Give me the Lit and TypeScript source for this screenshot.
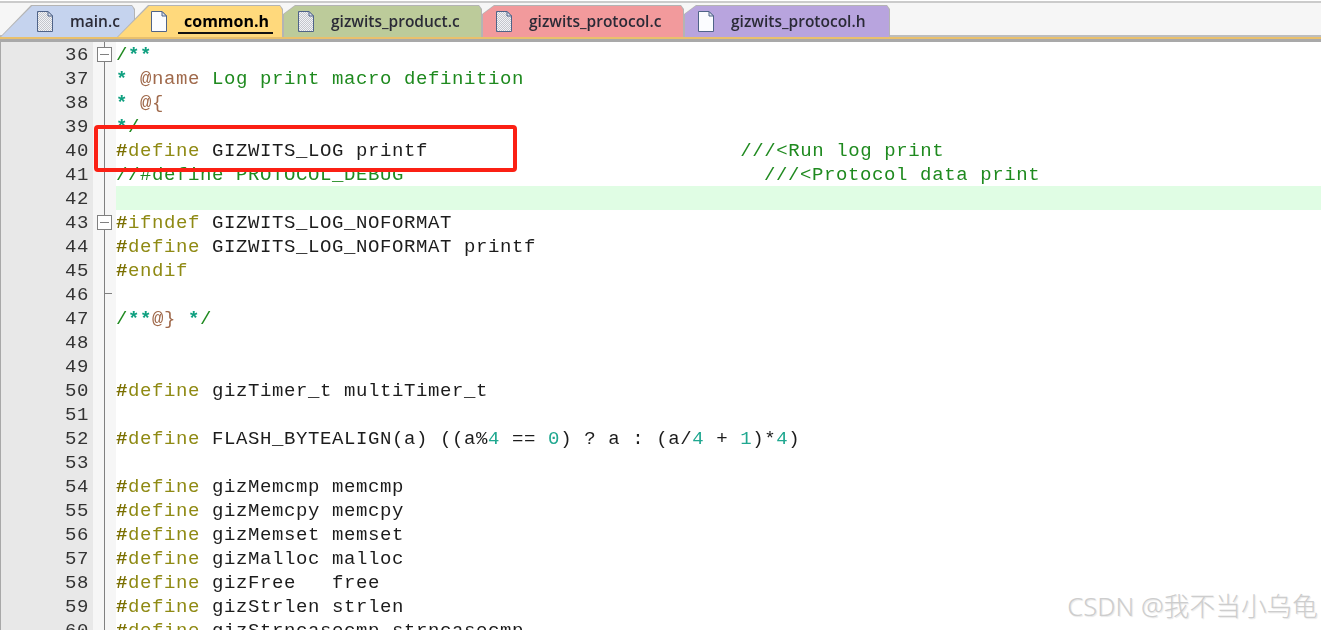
import { LitElement, html, css } from "lit";
import { customElement } from "lit/decorators.js";

type Seg = [string, string];
const def = (rest: string): Seg[] => [["h", "#"], ["k", "define"], ["t", " " + rest]];
const pad = (n: number) => " ".repeat(n);

const lines: { n: number; fold?: "box" | "end"; hl?: boolean; segs: Seg[] }[] = [
  { n: 36, fold: "box", segs: [["c", "/"], ["s", "**"]] },
  { n: 37, segs: [["s", "*"], ["c", " "], ["a", "@name"], ["c", " Log print macro definition"]] },
  { n: 38, segs: [["s", "*"], ["c", " "], ["a", "@{"]] },
  { n: 39, segs: [["s", "*"], ["c", "/"]] },
  { n: 40, segs: [...def("GIZWITS_LOG printf"), ["t", pad(26)], ["c", "///<Run log print"]] },
  { n: 41, segs: [["c", "//#define PROTOCOL_DEBUG" + pad(30) + "///<Protocol data print"]] },
  { n: 42, hl: true, segs: [] },
  { n: 43, fold: "box", segs: [["h", "#"], ["k", "ifndef"], ["t", " GIZWITS_LOG_NOFORMAT"]] },
  { n: 44, segs: def("GIZWITS_LOG_NOFORMAT printf") },
  { n: 45, segs: [["h", "#"], ["k", "endif"]] },
  { n: 46, fold: "end", segs: [] },
  { n: 47, segs: [["c", "/"], ["s", "**"], ["a", "@"], ["a", "}"], ["c", " "], ["s", "*"], ["c", "/"]] },
  { n: 48, segs: [] },
  { n: 49, segs: [] },
  { n: 50, segs: def("gizTimer_t multiTimer_t") },
  { n: 51, segs: [] },
  {
    n: 52,
    segs: [
      ...def("FLASH_BYTEALIGN(a) ((a%"),
      ["n", "4"], ["t", " == "], ["n", "0"], ["t", ") ? a : (a/"], ["n", "4"], ["t", " + "], ["n", "1"], ["t", ")*"], ["n", "4"], ["t", ")"],
    ],
  },
  { n: 53, segs: [] },
  { n: 54, segs: def("gizMemcmp memcmp") },
  { n: 55, segs: def("gizMemcpy memcpy") },
  { n: 56, segs: def("gizMemset memset") },
  { n: 57, segs: def("gizMalloc malloc") },
  { n: 58, segs: def("gizFree   free") },
  { n: 59, segs: def("gizStrlen strlen") },
  { n: 60, segs: def("gizStrncasecmp strncasecmp") },
];

const tabs = [
  { name: "main.c", cls: "main", hatch: true },
  { name: "common.h", cls: "common", hatch: false },
  { name: "gizwits_product.c", cls: "product", hatch: true },
  { name: "gizwits_protocol.c", cls: "protocol", hatch: true },
  { name: "gizwits_protocol.h", cls: "protoh", hatch: false },
];

const fileIcon = (hatch: boolean) => html`<svg class="file" width="18" height="23" viewBox="0 0 18 23">
  <defs>
    <pattern id="dots" width="2" height="2" patternUnits="userSpaceOnUse">
      <rect width="2" height="2" fill="#f2f3f6"/><rect width="1" height="1" fill="#c4c6cc"/><rect x="1" y="1" width="1" height="1" fill="#c4c6cc"/>
    </pattern>
  </defs>
  <path d="M1.5 1.5H12L16.5 6V21.5H1.5Z" fill="${hatch ? "url(#dots)" : "#fbfcff"}" stroke="#4f6388" stroke-width="1"/>
  <path d="M12 1.5V6H16.5Z" fill="#dfe6f2" stroke="#4f6388" stroke-width="1"/>
</svg>`;

@customElement("app-root")
export class AppRoot extends LitElement {
  static styles = css`
    :host { display: block; position: relative; height: 630px; overflow: hidden; background: #fff; }
    .tabbar { display: flex; height: 37px; box-sizing: border-box; padding-top: 2px; background: linear-gradient(#fff 0 1px, #cbcbcb 1px 3px, #f6f6f6 3px 35px, #bdbdbd 35px); filter: blur(0.35px); }
    .tab { box-sizing: border-box; height: 35px; display: flex; align-items: center; background: #b4b4b4; font: 600 15.5px "Open Sans", "Noto Sans", sans-serif; color: #2a2a36; padding-top: 3px; position: relative; gap: 16px; }
    .tab span { position: relative; }
    .tab::before { content: ""; position: absolute; inset: 0; background: var(--fill); clip-path: var(--inner); }
    .tab .file { position: relative; flex: none; }
    .main { width: 135px; --fill: #c5d3ee; clip-path: polygon(0 100%, 31px 3px, 132px 3px, 135px 7px, 135px 100%); --inner: polygon(1px 100%, 32px 4px, 132px 4px, 134px 8px, 134px 100%); padding-left: 36px; }
    .common { width: 166px; margin-left: -18px; --fill: #ffd97c; clip-path: polygon(0 100%, 31px 3px, 163px 3px, 166px 7px, 166px 100%); --inner: polygon(1px 100%, 32px 4px, 163px 4px, 165px 8px, 165px 100%); padding-left: 33px; color: #000; z-index: 1; font-weight: 700; font-size: 16px; }
    .common span::after { content: ""; position: absolute; left: -6px; right: -4px; top: 22px; height: 2px; background: #111; }
    .product { width: 199px; --fill: #bccb9a; clip-path: polygon(0 12px, 12px 3px, 196px 3px, 199px 7px, 199px 100%, 0 100%); --inner: polygon(1px 12px, 12px 4px, 196px 4px, 198px 8px, 198px 100%, 1px 100%); padding-left: 14px; }
    .protocol { width: 202px; --fill: #f29a9c; clip-path: polygon(0 12px, 12px 3px, 199px 3px, 202px 7px, 202px 100%, 0 100%); --inner: polygon(1px 12px, 12px 4px, 199px 4px, 201px 8px, 201px 100%, 1px 100%); padding-left: 13px; }
    .protoh { width: 206px; --fill: #b8a4de; clip-path: polygon(0 12px, 12px 3px, 203px 3px, 206px 7px, 206px 100%, 0 100%); --inner: polygon(1px 12px, 12px 4px, 203px 4px, 205px 8px, 205px 100%, 1px 100%); padding-left: 13px; }
    .rule { height: 5px; box-sizing: border-box; border-top: 2px solid #e9c06c; border-bottom: 3px solid #a9a9a9; filter: blur(0.35px); }
    .editor { position: relative; }
    .row { display: flex; height: 24px; }
    .num { width: 93px; box-sizing: border-box; flex: none; background: #e8e8e8; border-left: 1px solid #a8a8a8; padding-right: 4px; text-align: right; overflow: hidden; }
    .num, .code { font: 19px/26px "Liberation Mono", monospace; letter-spacing: 0.6px; }
    .num span { color: #333; filter: blur(0.35px); display: inline-block; }
    .fold { width: 23px; flex: none; position: relative; background-color: #f6f6f6; background-image: radial-gradient(#e2e2e2 0.6px, transparent 0.7px); background-size: 2px 2px; }
    .fold::before { content: ""; position: absolute; left: 11px; top: 0; bottom: 0; width: 1px; background: #808080; }
    .box { position: absolute; left: 4px; top: 5px; width: 15px; height: 15px; box-sizing: border-box; border: 1px solid #808080; background: #fff; }
    .box::after { content: ""; position: absolute; left: 2px; right: 2px; top: 6px; height: 1px; background: #808080; }
    .end { position: absolute; left: 11px; top: 11px; width: 8px; height: 1px; background: #808080; }
    .code { flex: 1; white-space: pre; color: #1c1c1c; overflow: hidden; }
    .code > div { filter: blur(0.35px); height: 24px; }
    .code.hl { background: #e0fde4; }
    .h { color: #7a6f00; font-weight: 700; }
    .k { color: #8f8a14; }
    .t { color: #1c1c1c; }
    .c { color: #1f8a1f; }
    .s { color: #10a080; font-weight: 700; }
    .a { color: #a06a4c; }
    .n { color: #20a890; }
    .mark { position: absolute; left: 94px; top: 83px; width: 423px; height: 47px; box-sizing: border-box; border: 4px solid #fb2014; border-radius: 4px; }
    .wm { position: absolute; right: 3px; bottom: 7px; font: 25.7px/32px "Noto Sans", "Noto Sans CJK SC", sans-serif; font-weight: 300; color: #cdcdcd; text-shadow: 1px 1px 1px #e8e8e8; white-space: pre; }
  `;

  render() {
    return html`
      <div class="tabbar">
        ${tabs.map(
          (t) => html`<div class="tab ${t.cls}">${fileIcon(t.hatch)}<span>${t.name}</span></div>`
        )}
      </div>
      <div class="rule"></div>
      <div class="editor">
        ${lines.map(
          (l) => html`<div class="row">
            <div class="num"><span>${l.n}</span></div>
            <div class="fold">
              ${l.fold === "box" ? html`<div class="box"></div>` : ""}
              ${l.fold === "end" ? html`<div class="end"></div>` : ""}
            </div>
            <div class="code ${l.hl ? "hl" : ""}"><div>${l.segs.map((s) => html`<span class="${s[0]}">${s[1]}</span>`)}</div></div>
          </div>`
        )}
        <div class="mark"></div>
      </div>
      <div class="wm">CSDN @我不当小乌龟</div>
    `;
  }
}
